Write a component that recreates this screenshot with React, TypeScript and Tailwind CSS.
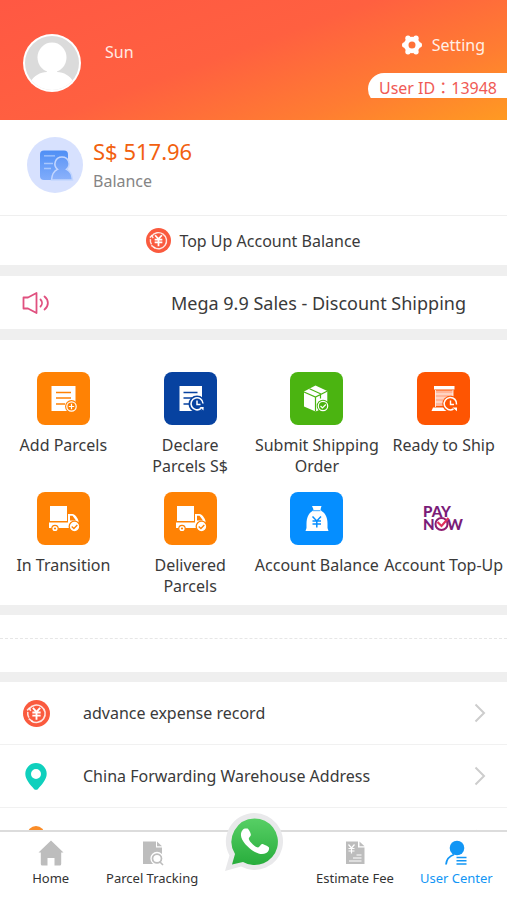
import type { ReactNode } from "react";

function YenCoin({ className }: { className: string }) {
  return (
    <svg viewBox="0 0 26 26" className={className} aria-hidden="true">
      <circle cx="13" cy="13" r="13" fill="#fa5a3e" />
      <g fill="none" stroke="#fff" strokeOpacity="0.85" strokeWidth="1.5">
        <path d="M6 8.500A8.400 8.400 0 1 1 8 20" />
        <path d="M4.600 11.500a8.400 8.400 0 0 0 1.100 5.500M4 10l2-2 1.500 2.500M5.500 18l4 3" />
        <path d="M9.500 7.500l3.500 4 3.500-4M9 12h8M9 15h8M13 11.500V19" strokeWidth="1.800" strokeOpacity="1" />
      </g>
    </svg>
  );
}

function Avatar() {
  return (
    <svg viewBox="0 0 58 58" className="size-[58px] shrink-0" role="img" aria-label="Avatar">
      <defs>
        <clipPath id="avatar-clip">
          <circle cx="29" cy="29" r="27" />
        </clipPath>
      </defs>
      <circle cx="29" cy="29" r="29" fill="#fff" />
      <g clipPath="url(#avatar-clip)">
        <rect width="58" height="58" fill="#dbdbdb" />
        <ellipse cx="29" cy="23.500" rx="14.500" ry="15" fill="#fff" />
        <path d="M24 34h10v4c7 0 13 4 16 9v14H8V47c3-5 9-9 16-9z" fill="#fff" />
      </g>
    </svg>
  );
}

function Gear() {
  return (
    <svg viewBox="0 0 20 20" className="size-5" aria-hidden="true">
      <g fill="#fff">
        <path
          fillRule="evenodd"
          d="M10 1.800a8.200 8.200 0 1 0 0 16.400 8.200 8.200 0 0 0 0-16.400zm0 4.700a3.500 3.500 0 1 1 0 7 3.500 3.500 0 0 1 0-7z"
        />
        <circle cx="6" cy="3.300" r="2.700" />
        <circle cx="14" cy="3.300" r="2.700" />
        <circle cx="2.700" cy="10" r="2.700" />
        <circle cx="17.300" cy="10" r="2.700" />
        <circle cx="6" cy="16.700" r="2.700" />
        <circle cx="14" cy="16.700" r="2.700" />
      </g>
    </svg>
  );
}

function BalanceIcon() {
  return (
    <svg viewBox="0 0 56 56" className="size-14 shrink-0" aria-hidden="true">
      <defs>
        <linearGradient id="doc" x1="0" y1="0" x2="0" y2="1">
          <stop offset="0" stopColor="#4f8ff5" />
          <stop offset="1" stopColor="#80acfb" />
        </linearGradient>
        <linearGradient id="person" x1="0" y1="0" x2="0" y2="1">
          <stop offset="0" stopColor="#6399f6" />
          <stop offset="1" stopColor="#8cb2fb" />
        </linearGradient>
      </defs>
      <circle cx="28" cy="28" r="28" fill="#d7e1fe" />
      <rect x="13" y="13.500" width="28" height="29.500" rx="4" fill="url(#doc)" />
      <path d="M17 18.800h11M17 26.500h9M17 31.500h7" stroke="#a9c8fd" strokeWidth="1.300" />
      <path
        d="M35 20a7 7 0 0 0-4.500 12.400c-3.500 1.500-5.500 5-6 10.600h21c-.5-5.600-2.500-9.100-6-10.600A7 7 0 0 0 35 20z"
        fill="url(#person)"
        stroke="#c3d6fe"
        strokeWidth="1.500"
      />
    </svg>
  );
}

function Speaker() {
  return (
    <svg viewBox="0 0 28 24" className="h-6 w-7" fill="none" stroke="#e0507f" strokeWidth="1.800" strokeLinejoin="round" strokeLinecap="round" aria-hidden="true">
      <path d="M1.500 6.500h4.500L14.500 2v20L6 17.500H1.500z" />
      <path d="M18.500 8.500c2 2 2 5 0 7M22.500 5.500c4.500 3.500 4.500 9.500 0 13" />
    </svg>
  );
}

function Tile({ color, children }: { color: string; children: ReactNode }) {
  return (
    <span className={`flex size-[53px] items-center justify-center rounded-lg ${color}`}>
      <svg viewBox="0 0 53 53" className="size-full" aria-hidden="true">
        {children}
      </svg>
    </span>
  );
}

function AddIcon() {
  return (
    <Tile color="bg-[#ff8204]">
      <path d="M14.500 14h24v25h-24z" fill="#fff" />
      <path d="M19 20.500h15M19 26h15M19 32h9" stroke="#ff8204" strokeWidth="1.500" />
      <circle cx="34.500" cy="34.500" r="6.500" fill="#ff8204" />
      <circle cx="34.500" cy="34.500" r="4.700" fill="none" stroke="#fff" strokeWidth="1.200" />
      <path d="M34.500 31.800v5.400M31.800 34.500h5.400" stroke="#fff" strokeWidth="1.200" />
    </Tile>
  );
}

function DeclareIcon() {
  return (
    <Tile color="bg-[#0742a0]">
      <path d="M15.500 14h22.500v25H15.500z" fill="#fff" />
      <path d="M19.500 20.500h14M19.500 26h9M19.500 32h6" stroke="#0742a0" strokeWidth="1.600" />
      <circle cx="33" cy="32" r="8.500" fill="#0742a0" />
      <path d="M37 36.300A6 6 0 1 1 39 31.500" fill="none" stroke="#fff" strokeWidth="1.600" />
      <path d="M33 28.500v4h3.500" fill="none" stroke="#fff" strokeWidth="1.500" />
      <path d="M35.500 35l4.200 0-.2 3.500z" fill="#fff" />
    </Tile>
  );
}

function BoxIcon() {
  return (
    <Tile color="bg-[#4bb411]">
      <path d="M25.500 13.500L37.300 19v16L25.500 39.500 14 34.500V19.500z" fill="#fff" />
      <path d="M14 20l11.500 5L37.500 19M25.500 25v14.500M19.500 16.800L31 22M30.500 22.500v4" fill="none" stroke="#4bb411" strokeWidth="1.200" />
      <circle cx="33" cy="34" r="6.300" fill="#4bb411" />
      <circle cx="33" cy="34" r="4.700" fill="none" stroke="#fff" strokeWidth="1.200" />
      <path d="M30.500 34l2 2 3.300-3.500" fill="none" stroke="#fff" strokeWidth="1.200" />
    </Tile>
  );
}

function ReadyIcon() {
  return (
    <Tile color="bg-[#fe5502]">
      <path d="M17 14h20.500v3.500H17z" fill="#fff" />
      <path d="M18.500 18.500H36V34H18.500z" fill="#ffb69b" />
      <path d="M18.500 18v17M36 18v8M18.500 22H36M18.500 26h11M18.500 30h8" stroke="#fff" strokeWidth="0.800" />
      <path d="M16 35.500h15.500V39H14.500z" fill="#fff" />
      <circle cx="33.500" cy="32" r="8.200" fill="#fe5502" />
      <path d="M36.500 37A6.200 6.200 0 1 1 39.500 32.500" fill="none" stroke="#fff" strokeWidth="1.500" />
      <path d="M33.500 28.500v4h3.500" fill="none" stroke="#fff" strokeWidth="1.400" />
      <path d="M35.500 35.500h4.500v3.700z" fill="#fff" />
    </Tile>
  );
}

function TruckIcon() {
  return (
    <Tile color="bg-[#ff8204]">
      <path d="M13 14h17v15H13zM12 30.500h19V22h4.500c2.500 0 5.500 4.500 6 7v7H12z" fill="#fff" />
      <path d="M33 23.800h2.500l3.500 4.700h-6z" fill="#ff8204" />
      <circle cx="18" cy="36.500" r="3.200" fill="#fff" stroke="#ff8204" strokeWidth="1.200" />
      <circle cx="18" cy="36.500" r="1.100" fill="#ff8204" />
      <circle cx="37.500" cy="34.500" r="5.300" fill="#fff" stroke="#ff8204" strokeWidth="1.300" />
      <path d="M34.700 34.500l2.200 2 3.400-3.500" fill="none" stroke="#ff8204" strokeWidth="1.300" />
    </Tile>
  );
}

function MoneyBagIcon() {
  return (
    <Tile color="bg-[#058eff]">
      <path d="M22 14h9.500l-1 3.500 1 1.500c4 2 6 7 6 12.500v4.500l1 3h-23l1-3v-4.500c0-5.500 2-10.500 6-12.500l1-1.500z" fill="#fff" />
      <path d="M23 18.700h7.500" stroke="#058eff" strokeWidth="0.800" />
      <path d="M22.500 24.500l4.300 4.500 4.200-4.500M22.500 29h8.500M22.500 32h8.500M26.800 29v6.500" fill="none" stroke="#058eff" strokeWidth="1.500" />
    </Tile>
  );
}

function PayNowIcon() {
  return (
    <span className="flex size-[53px]">
      <svg viewBox="0 0 53 53" className="size-full" aria-hidden="true">
        <g fill="#7a1c78" fontFamily="Lato, sans-serif" fontWeight="900" fontSize="15">
          <text x="6" y="25">PAY</text>
          <text x="6" y="38">N</text>
          <text x="30" y="38">W</text>
        </g>
        <circle cx="24.500" cy="32" r="6" fill="#fff" stroke="#8e1c70" strokeWidth="2" />
        <path d="M20.500 30l4 4 7-8" fill="none" stroke="#e0315c" strokeWidth="2.200" />
      </svg>
    </span>
  );
}

const shortcuts: { lines: string[]; icon: ReactNode }[] = [
  { lines: ["Add Parcels"], icon: <AddIcon /> },
  { lines: ["Declare", "Parcels S$"], icon: <DeclareIcon /> },
  { lines: ["Submit Shipping", "Order"], icon: <BoxIcon /> },
  { lines: ["Ready to Ship"], icon: <ReadyIcon /> },
  { lines: ["In Transition"], icon: <TruckIcon /> },
  { lines: ["Delivered", "Parcels"], icon: <TruckIcon /> },
  { lines: ["Account Balance"], icon: <MoneyBagIcon /> },
  { lines: ["Account Top-Up"], icon: <PayNowIcon /> },
];

function PinIcon() {
  return (
    <svg viewBox="0 0 22 27" className="h-[27px] w-[22px]" aria-hidden="true">
      <path
        fillRule="evenodd"
        d="M11 0a10.700 10.700 0 0 0-10.700 10.700c0 6 5.200 11 8.700 15.200a2.600 2.600 0 0 0 4 0c3.500-4.200 8.700-9.200 8.700-15.200A10.700 10.700 0 0 0 11 0zm0 6a5 5 0 1 1 0 10 5 5 0 0 1 0-10z"
        fill="#0fd0bd"
      />
    </svg>
  );
}

function OrangeDot() {
  return (
    <svg viewBox="0 0 26 26" className="size-[26px]" aria-hidden="true">
      <circle cx="13" cy="9" r="9" fill="#fa8c28" />
      <path d="M2 26c0-5 5-7 11-7s11 2 11 7z" fill="#fa8c28" />
    </svg>
  );
}

function Row({ icon, label }: { icon: ReactNode; label?: string }) {
  return (
    <li className="border-b border-[#f1f1f1]">
      <a href="#" className="flex h-[62px] items-center pr-5">
        <span className="flex w-[72px] shrink-0 justify-center">{icon}</span>
        <span className="flex-1 pl-[11px]">{label}</span>
        <svg viewBox="0 0 14 20" className="h-5 w-3.5" fill="none" stroke="#cdcdcd" strokeWidth="2" aria-hidden="true">
          <path d="M2.500 1.500l8.500 8.500-8.500 8.500" />
        </svg>
      </a>
    </li>
  );
}

function Tab({ icon, label, active }: { icon: ReactNode; label: string; active?: boolean }) {
  return (
    <a
      href="#"
      aria-current={active ? "page" : undefined}
      className={`flex flex-1 flex-col items-center gap-0.5 pt-2 text-[13px] leading-5 whitespace-nowrap ${active ? "text-[#1296f5]" : "text-[#333]"}`}
    >
      {icon}
      {label}
    </a>
  );
}

function WhatsApp() {
  return (
    <svg viewBox="0 0 58 58" className="size-[58px]" role="img" aria-label="WhatsApp">
      <defs>
        <linearGradient id="wa" x1="0" y1="0" x2="0" y2="1">
          <stop offset="0" stopColor="#57cf65" />
          <stop offset="1" stopColor="#28ad3c" />
        </linearGradient>
      </defs>
      <path d="M29.500 0A28.500 28.500 0 1 1 16 53.600L0 58l4.500-15.500A28.500 28.500 0 0 1 29.500 0z" fill="#e9e9eb" />
      <path d="M29.500 5.500A23.300 23.300 0 1 1 18 49L7 51.500l3-10.500A23.300 23.300 0 0 1 29.500 5.500z" fill="url(#wa)" />
      <path
        d="M20.800 15.500c-1-.2-2 0-2.800.9-4 4.300-2 10.600 4.700 17.200 6.500 6.300 13.500 9.300 18.500 6.400 2.200-1.300 3-3.200 2.900-5.300-.1-.8-5.800-3.700-7-3.600-1.500.2-2.400 3.200-4 3.400-2.100.1-8.500-5.500-9.300-8.600-.3-1.300 1.900-2.500 2.100-4 .1-1.200-2.300-6-3.400-6.300z"
        fill="#fff"
      />
    </svg>
  );
}

export default function App() {
  return (
    <div className="flex h-screen flex-col bg-white font-['Noto_Sans','Noto_Sans_CJK_TC',sans-serif] text-base text-[#3a3a3a]">
      <main className="flex-1 overflow-y-auto bg-[#efefef] [scrollbar-width:none]">
        <header className="flex h-[120px] justify-between bg-[linear-gradient(160deg,#ff5843_0%,#ff6040_45%,#ff7c32_75%,#ff9a22_100%)] text-white">
          <div className="flex pt-[34px] pl-[23px]">
            <Avatar />
            <span className="pt-1.5 pl-6 text-[#ffeae4]">Sun</span>
          </div>
          <div className="flex flex-col items-end pt-[33px]">
            <button type="button" className="mr-[22px] flex items-center gap-2.5 leading-6 text-[#fff0e6]">
              <Gear />
              Setting
            </button>
            <div className="mt-4 h-[25px] overflow-hidden">
              <div className="h-8 rounded-l-full bg-white pr-2.5 pl-[11px] leading-[30px] text-[#f05a55]">User ID：13948</div>
            </div>
          </div>
        </header>

        <section className="bg-white">
          <div className="flex h-24 gap-2.5 border-b border-[#efefef] pt-[17px] pl-[27px]">
            <BalanceIcon />
            <div>
              <p className="text-[22px] leading-7 text-[#f2600f]">S$ 517.96</p>
              <p className="mt-1 leading-6 text-[#858585]">Balance</p>
            </div>
          </div>
          <button type="button" className="flex h-[49px] w-full items-center justify-center gap-2">
            <YenCoin className="size-[25px]" />
            Top Up Account Balance
          </button>
        </section>

        <section className="mt-[11px] flex h-[53px] items-center bg-white pl-[22px]">
          <Speaker />
          <p className="flex-1 pl-[121px] text-lg whitespace-nowrap">Mega 9.9 Sales - Discount Shipping</p>
        </section>

        <section className="mt-[11px] grid grid-cols-4 gap-y-[15px] bg-white pt-8 pb-2">
          {shortcuts.map(({ lines, icon }) => (
            <a key={lines[0]} href="#" className="flex flex-col items-center gap-2.5">
              {icon}
              <span className="h-[42px] text-center leading-[21px] whitespace-nowrap">
                {lines.map((line) => (
                  <span key={line} className="block">
                    {line}
                  </span>
                ))}
              </span>
            </a>
          ))}
        </section>

        <section className="mt-[10px] h-[57px] bg-white pt-[23px]">
          <div className="border-t border-dashed border-[#e6e6e6]" />
        </section>

        <ul className="mt-[10px] bg-white">
          <Row icon={<YenCoin className="size-[27px]" />} label="advance expense record" />
          <Row icon={<PinIcon />} label="China Forwarding Warehouse Address" />
          <Row icon={<OrangeDot />} />
        </ul>
      </main>

      <nav className="relative flex h-[70px] shrink-0 border-t-2 border-[#dcdcdc] bg-white">
        <Tab
          label="Home"
          icon={
            <svg viewBox="0 0 26 26" className="size-[26px]" fill="#bdbdbd" aria-hidden="true">
              <path d="M13 .500L25.500 12.500h-2.300V24a1.500 1.500 0 0 1-1.500 1.500h-5.200V18h-7v7.500H4.300A1.500 1.500 0 0 1 2.800 24V12.500H.500z" />
            </svg>
          }
        />
        <Tab
          label="Parcel Tracking"
          icon={
            <svg viewBox="0 0 26 26" className="size-[26px]" fill="#bdbdbd" aria-hidden="true">
              <path d="M4 1.500h13v6h6V24H4z" />
              <path d="M18 1.500l5 4.700h-5z" />
              <circle cx="18" cy="18.500" r="6" stroke="#fff" strokeWidth="1.300" />
              <circle cx="18" cy="18.500" r="3.600" fill="#fff" />
              <path d="M20.500 21.500l3.500 3.500" stroke="#bdbdbd" strokeWidth="1.600" />
            </svg>
          }
        />
        <div className="flex-1" />
        <Tab
          label="Estimate Fee"
          icon={
            <svg viewBox="0 0 26 26" className="size-[26px]" fill="#bdbdbd" aria-hidden="true">
              <path d="M4 1.500h12v6h6.500V24H4z" />
              <path d="M17.500 1.500l5 4.700h-5z" />
              <path d="M6.500 4.500L9.500 8l3-3.500M6.500 8.500h6M6.500 11h6M9.500 8v5.500M14.500 15h5M11 18h8.500M7 21h12.500" fill="none" stroke="#fff" strokeWidth="1.200" />
            </svg>
          }
        />
        <Tab
          active
          label="User Center"
          icon={
            <svg viewBox="0 0 26 26" className="size-[26px]" aria-hidden="true">
              <circle cx="14" cy="8" r="7.300" fill="#1296f5" />
              <path d="M3 24.500c.5-5 3.500-8.500 8-10" fill="none" stroke="#1296f5" strokeWidth="1.800" />
              <path d="M13.500 17.500h10M13.500 20.700h10M13.500 24h10" stroke="#1296f5" strokeWidth="1.600" />
            </svg>
          }
        />
        <a href="#" className="absolute -top-[19px] left-1/2 -translate-x-1/2">
          <WhatsApp />
        </a>
      </nav>
    </div>
  );
}
